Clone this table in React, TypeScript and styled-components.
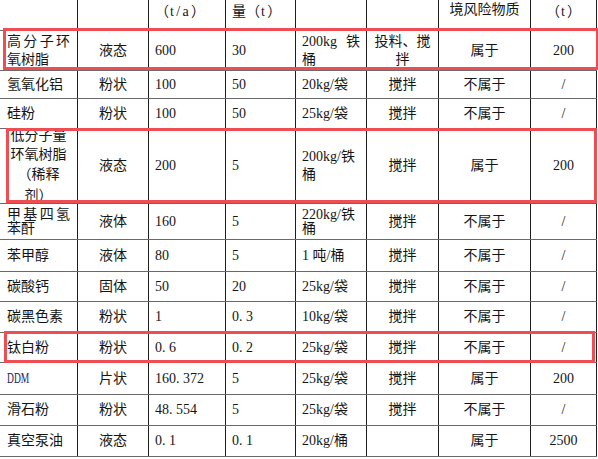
import React from "react";
import styled, { createGlobalStyle } from "styled-components";

const GlobalStyle = createGlobalStyle`
  html, body {
    margin: 0;
    padding: 0;
    background: #ffffff;
  }
  body {
    font-family: "Liberation Serif", "Noto Sans CJK SC", serif;
    color: #151515;
  }
`;

type Align = "left" | "center";

interface Column {
  width: number;
  align: Align;
  pad: number;
}

const columns: Column[] = [
  { width: 78, align: "left", pad: 7 },
  { width: 71, align: "center", pad: 2 },
  { width: 77, align: "left", pad: 6 },
  { width: 70, align: "left", pad: 6 },
  { width: 71, align: "left", pad: 6 },
  { width: 72, align: "center", pad: 4 },
  { width: 92, align: "center", pad: 4 },
  { width: 66, align: "center", pad: 2 },
];

// a line of text in a cell; spread = justified across the cell
interface LineData {
  text: string;
  spread?: boolean;
}

type CellData = string | LineData[];

interface RowData {
  height: number;
  lineHeight?: number;
  header?: boolean;
  firstAlign?: Align;
  cells: CellData[];
}

const rows: RowData[] = [
  {
    height: 31,
    header: true,
    cells: ["", "", "（t/a）", "量（t）", "", "", "境风险物质", "（t）"],
  },
  {
    height: 40,
    lineHeight: 18,
    cells: [
      [{ text: "高分子环", spread: true }, { text: "氧树脂" }],
      "液态",
      "600",
      "30",
      [{ text: "200kg 铁", spread: true }, { text: "桶" }],
      [{ text: "投料、搅" }, { text: "拌" }],
      "属于",
      "200",
    ],
  },
  { height: 28, cells: ["氢氧化铝", "粉状", "100", "50", "20kg/袋", "搅拌", "不属于", "/"] },
  { height: 30, cells: ["硅粉", "粉状", "100", "50", "25kg/袋", "搅拌", "不属于", "/"] },
  {
    height: 75,
    lineHeight: 18.5,
    firstAlign: "center",
    cells: [
      [{ text: "低分子量" }, { text: "环氧树脂" }, { text: "（稀释" }, { text: "剂）" }],
      "液态",
      "200",
      "5",
      [{ text: "200kg/铁" }, { text: "桶" }],
      "搅拌",
      "属于",
      "200",
    ],
  },
  {
    height: 36,
    lineHeight: 14,
    cells: [
      [{ text: "甲基四氢", spread: true }, { text: "苯酐" }],
      "液体",
      "160",
      "5",
      [{ text: "220kg/铁" }, { text: "桶" }],
      "搅拌",
      "不属于",
      "/",
    ],
  },
  { height: 32, cells: ["苯甲醇", "液体", "80", "5", "1 吨/桶", "搅拌", "不属于", "/"] },
  { height: 30, cells: ["碳酸钙", "固体", "50", "20", "25kg/袋", "搅拌", "不属于", "/"] },
  { height: 31, cells: ["碳黑色素", "粉状", "1", "0.3", "10kg/袋", "搅拌", "不属于", "/"] },
  { height: 30, cells: ["钛白粉", "粉状", "0.6", "0.2", "25kg/袋", "搅拌", "不属于", "/"] },
  { height: 32, cells: ["DDM", "片状", "160.372", "5", "25kg/袋", "搅拌", "属于", "200"] },
  { height: 31, cells: ["滑石粉", "粉状", "48.554", "5", "25kg/袋", "搅拌", "不属于", "/"] },
  { height: 31, cells: ["真空泵油", "液态", "0.1", "0.1", "20kg/桶", "", "属于", "2500"] },
];

const highlights = [
  { left: 3, top: 28, width: 596, height: 42 },
  { left: 6, top: 128, width: 591, height: 75 },
  { left: 4, top: 331, width: 591, height: 32 },
];

const Page = styled.div`
  position: relative;
  width: 598px;
  height: 459px;
  overflow: hidden;
  background: #ffffff;
`;

const Table = styled.div`
  display: flex;
  flex-direction: column;
  width: 597px;
`;

const Row = styled.div<{ $height: number }>`
  display: grid;
  grid-template-columns: ${columns.map((c) => `${c.width}px`).join(" ")};
  height: ${(p) => p.$height}px;
  border-bottom: 1px solid #6a6a6a;
  box-sizing: border-box;
`;

const Cell = styled.div<{
  $align: Align;
  $pad: number;
  $lineHeight: number;
  $header?: boolean;
}>`
  display: flex;
  flex-direction: column;
  justify-content: ${(p) => (p.$header ? "flex-start" : "center")};
  padding: ${(p) => (p.$header ? "1px" : "0")} ${(p) => p.$pad}px 0;
  box-sizing: border-box;
  border-right: 1px solid #1e1e1e;
  text-align: ${(p) => p.$align};
  font-size: 14px;
  line-height: ${(p) => p.$lineHeight}px;
  white-space: nowrap;
  overflow: hidden;
`;

const Line = styled.div<{ $spread?: boolean }>`
  text-align-last: ${(p) => (p.$spread ? "justify" : "auto")};
`;

// full-width CJK brackets, as the source document sets them
const Bracket = styled.span`
  display: inline-block;
  width: 14px;
  text-align: center;
  font-family: "Noto Sans CJK SC", sans-serif;
`;

// latin letters inside brackets sit in half-width slots
const Latin = styled.span`
  letter-spacing: 2.3px;
  padding-left: 1px;
`;

// the source font sets the decimal point in a half-width slot
const Dot = styled.span`
  padding-right: 3.5px;
`;

const Narrow = styled.span`
  display: inline-block;
  transform: scaleX(0.68);
  transform-origin: left center;
  color: #2b1d5c;
`;

const Highlight = styled.div<{
  $left: number;
  $top: number;
  $width: number;
  $height: number;
}>`
  position: absolute;
  left: ${(p) => p.$left}px;
  top: ${(p) => p.$top}px;
  width: ${(p) => p.$width}px;
  height: ${(p) => p.$height}px;
  box-sizing: border-box;
  border: 3px solid #ee4d54;
  pointer-events: none;
`;

function renderText(text: string) {
  if (text === "DDM") return <Narrow>{text}</Narrow>;
  if (/^\d+\.\d+$/.test(text)) {
    const [a, b] = text.split(".");
    return (
      <span>
        {a}
        <Dot>.</Dot>
        {b}
      </span>
    );
  }
  if (/[（）]/.test(text)) {
    const parts = text.split(/([（）])/).filter(Boolean);
    return (
      <span>
        {parts.map((p, i) => {
          if (p === "（" || p === "）") return <Bracket key={i}>{p}</Bracket>;
          if (/^[a-z/]+$/.test(p)) return <Latin key={i}>{p}</Latin>;
          return p;
        })}
      </span>
    );
  }
  return text;
}

function renderContent(cell: CellData) {
  if (typeof cell === "string") return renderText(cell);
  return cell.map((line, i) => (
    <Line key={i} $spread={line.spread}>
      {renderText(line.text)}
    </Line>
  ));
}

export default function App() {
  return (
    <Page>
      <GlobalStyle />
      <Table>
        {rows.map((row, r) => (
          <Row key={r} $height={row.height}>
            {row.cells.map((cell, c) => (
              <Cell
                key={c}
                $align={c === 0 && row.firstAlign ? row.firstAlign : columns[c].align}
                $pad={columns[c].pad}
                $lineHeight={row.lineHeight ?? 18}
                $header={row.header}
              >
                {renderContent(cell)}
              </Cell>
            ))}
          </Row>
        ))}
      </Table>
      {highlights.map((h, i) => (
        <Highlight
          key={i}
          $left={h.left}
          $top={h.top}
          $width={h.width}
          $height={h.height}
        />
      ))}
    </Page>
  );
}
